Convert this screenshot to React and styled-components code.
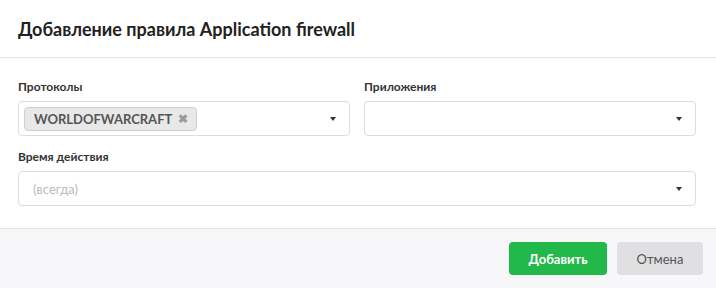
import React from "react";
import styled, { createGlobalStyle } from "styled-components";

const Global = createGlobalStyle`
  html, body { margin: 0; padding: 0; background: #fff; }
  body { font-family: Lato, "Open Sans", sans-serif; }
  * { box-sizing: border-box; }
`;

const Dialog = styled.div`
  width: 716px;
  height: 288px;
  display: flex;
  flex-direction: column;
  background: #fff;
`;

const Header = styled.div`
  height: 58px;
  padding: 0 18px;
  display: flex;
  align-items: center;
  border-bottom: 1px solid #e3e3e3;
`;

const Title = styled.h1`
  margin: 0;
  margin-top: 1px;
  font-size: 18px;
  font-weight: 700;
  color: #222;
`;

const Body = styled.div`
  flex: 1;
  padding: 21px 20px 0 18px;
  display: flex;
  flex-direction: column;
  gap: 13px;
`;

const Row = styled.div`
  display: grid;
  grid-template-columns: ${(p) => (p.$cols === 2 ? "1fr 1fr" : "1fr")};
  column-gap: 14px;
`;

const Field = styled.div`
  display: flex;
  flex-direction: column;
  gap: 7px;
`;

const Label = styled.label`
  font-size: 12px;
  font-weight: 700;
  color: #333;
  line-height: 15px;
`;

const Select = styled.div`
  height: 35px;
  border: 1px solid #dcdcdc;
  border-radius: 4px;
  display: flex;
  align-items: center;
  padding: 0 13px 0 5px;
  background: #fff;
`;

const Values = styled.div`
  flex: 1;
  display: flex;
  align-items: center;
  min-width: 0;
`;

const Tag = styled.span`
  display: inline-flex;
  align-items: center;
  gap: 6px;
  height: 24px;
  padding: 0 8px 0 9px;
  background: #e8e8e8;
  border: 1px solid #cfcfcf;
  border-radius: 4px;
  font-size: 13px;
  font-weight: 700;
  color: #555;
`;

const TagRemove = styled.span`
  font-size: 12px;
  color: #999;
  line-height: 1;
`;

const Placeholder = styled.span`
  padding-left: 9px;
  font-size: 13px;
  color: #bbb;
`;

const Caret = styled.span`
  width: 0;
  height: 0;
  border-left: 3.5px solid transparent;
  border-right: 3.5px solid transparent;
  border-top: 4px solid #333;
`;

const Footer = styled.div`
  height: 60px;
  background: #f7f7f9;
  border-top: 1px solid #e3e3e3;
  display: flex;
  justify-content: flex-end;
  align-items: center;
  gap: 10px;
  padding: 0 13px 0 0;
`;

const Button = styled.button`
  height: 33px;
  min-width: ${(p) => p.$w}px;
  border: none;
  border-radius: 4px;
  font-family: Lato, sans-serif;
  font-size: 13px;
  font-weight: ${(p) => (p.$primary ? 700 : 400)};
  color: ${(p) => (p.$primary ? "#fff" : "#555")};
  background: ${(p) => (p.$primary ? "#22b94a" : "#e0e0e2")};
  padding: 0 14px;
  cursor: pointer;
`;

export default function App() {
  return (
    <>
      <Global />
      <Dialog>
        <Header>
          <Title>Добавление правила Application firewall</Title>
        </Header>
        <Body>
          <Row $cols={2}>
            <Field>
              <Label>Протоколы</Label>
              <Select>
                <Values>
                  <Tag>
                    WORLDOFWARCRAFT <TagRemove>✖</TagRemove>
                  </Tag>
                </Values>
                <Caret />
              </Select>
            </Field>
            <Field>
              <Label>Приложения</Label>
              <Select>
                <Values />
                <Caret />
              </Select>
            </Field>
          </Row>
          <Row $cols={1}>
            <Field>
              <Label>Время действия</Label>
              <Select>
                <Values>
                  <Placeholder>(всегда)</Placeholder>
                </Values>
                <Caret />
              </Select>
            </Field>
          </Row>
        </Body>
        <Footer>
          <Button $primary $w={98}>Добавить</Button>
          <Button $w={86}>Отмена</Button>
        </Footer>
      </Dialog>
    </>
  );
}
